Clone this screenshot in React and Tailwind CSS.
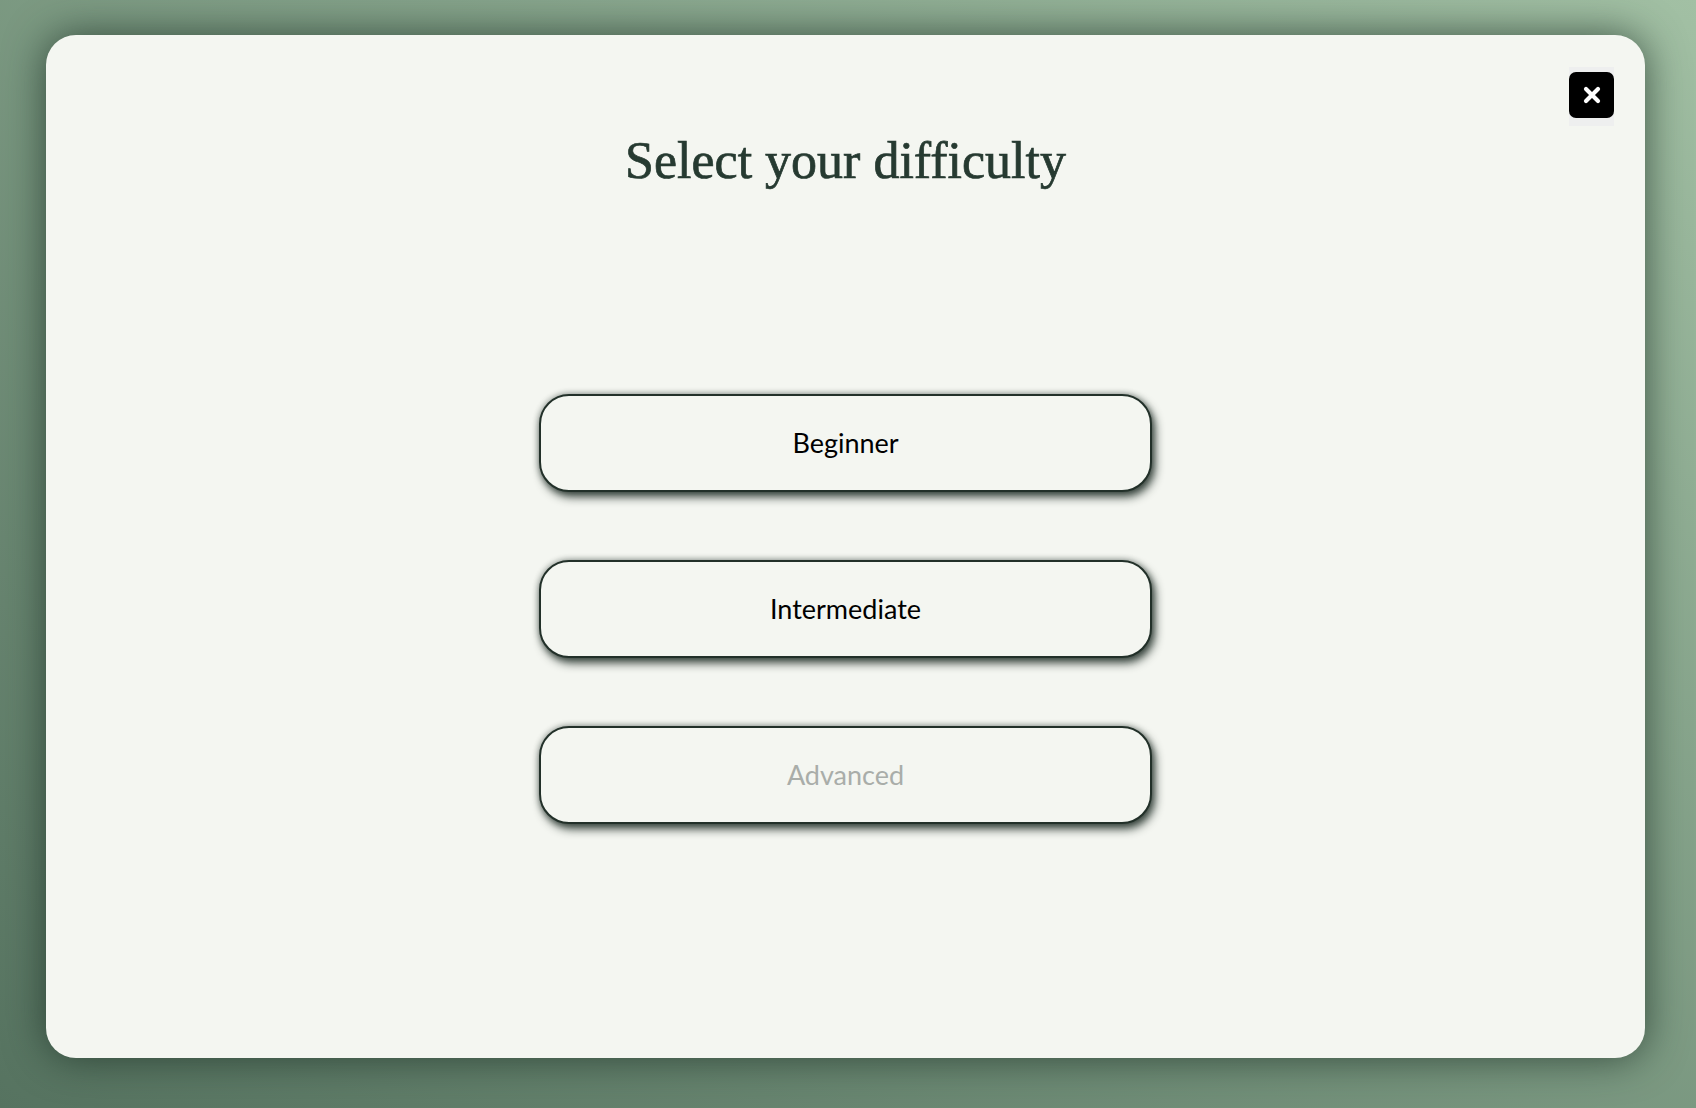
import { useState } from "react";

const levels = [
  { name: "Beginner", disabled: false },
  { name: "Intermediate", disabled: false },
  { name: "Advanced", disabled: true },
];

const CloseIcon = () => (
  <span className="flex h-[46px] w-[45px] items-center justify-center rounded-[7px] bg-black">
    <svg width="18" height="18" viewBox="0 0 18 18">
      <path
        d="M3 3 L15 15 M15 3 L3 15"
        stroke="#ffffff"
        strokeWidth="4.2"
        strokeLinecap="round"
      />
    </svg>
  </span>
);

const App = () => {
  const [level, setLevel] = useState(null);

  return (
    <div className="h-[1108px] w-full overflow-hidden bg-linear-to-tr from-[#567360] to-[#a2c0a4] pt-[35px] pl-[46px]">
      <div className="relative flex h-[1023px] w-[1599px] flex-col items-center rounded-[30px] bg-[#f4f6f1] shadow-[0_0_40px_rgba(28,48,38,0.75)]">
        <button
          type="button"
          aria-label="Close"
          className="absolute top-[32px] right-[31px] flex h-[59px] w-[45px] items-start bg-[#eeefef] pt-[5px]"
        >
          <CloseIcon />
        </button>

        <h1 className="mt-[100px] font-['Liberation_Serif',serif] text-[52px] leading-none text-[#263a31] [-webkit-text-stroke:0.7px_#263a31]">
          Select your difficulty
        </h1>

        <div className="mt-[207px] flex flex-col gap-[68px]">
          {levels.map((l) => (
            <button
              key={l.name}
              type="button"
              disabled={l.disabled}
              onClick={() => setLevel(l.name)}
              className={`flex h-[98px] w-[613px] items-center justify-center rounded-[30px] border-2 border-[#223029] bg-[#f4f6f1] font-['Lato',sans-serif] text-[27px] shadow-[3px_5px_10px_rgba(28,42,35,0.85),0_0_6px_rgba(28,42,35,0.45)] ${
                l.disabled ? "text-[#a9ada9]" : "text-black"
              } ${level === l.name ? "bg-[#e8eee6]" : ""}`}
            >
              {l.name}
            </button>
          ))}
        </div>
      </div>
    </div>
  );
};

export default App;
